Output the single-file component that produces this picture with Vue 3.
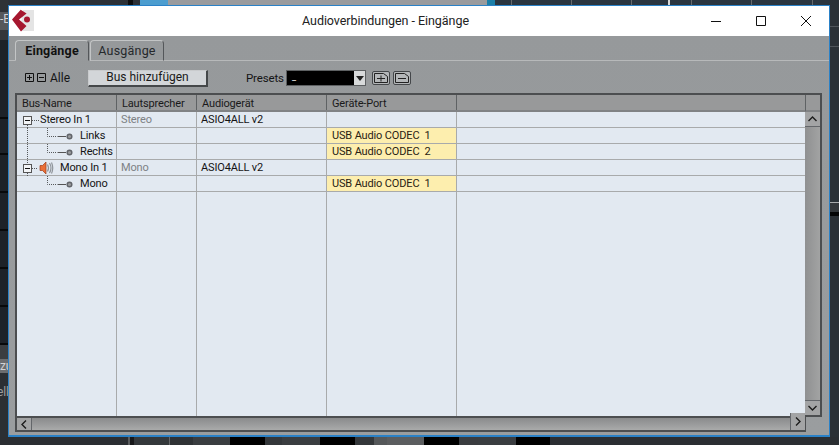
<script setup>
const columns = ['Bus-Name', 'Lautsprecher', 'Audiogerät', 'Geräte-Port', '']
const rows = [
  { name: 'Stereo In 1', tree: 'stereo', speaker: 'Stereo', device: 'ASIO4ALL v2', port: '' },
  { name: 'Links', tree: 'first', speaker: '', device: '', port: 'USB Audio CODEC  1' },
  { name: 'Rechts', tree: 'last', speaker: '', device: '', port: 'USB Audio CODEC  2' },
  { name: 'Mono In 1', tree: 'mono', speaker: 'Mono', device: 'ASIO4ALL v2', port: '' },
  { name: 'Mono', tree: 'child', speaker: '', device: '', port: 'USB Audio CODEC  1' },
]
const treeWidth = { stereo: 23, first: 63, last: 63, mono: 43, child: 63 }
const topSegs = [[128,'#2b3036'],[5,'#0c0d0e'],[7,'#2b3036'],[28,'#4c9dcf'],[319,'#9a9b9d'],[8,'#1b7fa8'],[16,'#2a3540'],[1,'#66696c'],[59,'#2a3540'],[1,'#66696c'],[59,'#2a3540'],[1,'#66696c'],[36,'#2a3540'],[2,'#d8d8d8'],[21,'#2a3540'],[1,'#66696c'],[59,'#2a3540'],[1,'#66696c'],[60,'#2a3540'],[1,'#66696c'],[26,'#2a3540']]
const bottomSegs = [[128,'#2b2e32'],[2,'#5a5c5e'],[4,'#17181a'],[35,'#34383b'],[1,'#66686a'],[23,'#2f3235'],[37,'#3a3d40'],[35,'#000'],[17,'#34373a'],[38,'#3a3d40'],[35,'#000'],[19,'#34373a'],[13,'#55585a'],[37,'#5b5d5f'],[35,'#000'],[19,'#3a3c3f'],[38,'#3a3d40'],[34,'#000'],[288,'#2b2e32']]
const leftSegs = [[12,'#2e3236'],[18,'#55585b','-E'],[10,'#34373a'],[77,'#1d2228'],[2,'#08090a'],[34,'#1d2228'],[2,'#08090a'],[36,'#1d2228'],[2,'#08090a'],[36,'#1d2228'],[2,'#08090a'],[36,'#1d2228'],[2,'#08090a'],[36,'#1d2228'],[2,'#08090a'],[36,'#1d2228'],[2,'#08090a'],[14,'#3a3d40'],[14,'#6b6d6f','zu'],[12,'#2b2f33'],[14,'#2b2f33','ell'],[41,'#2b2f33']]
const rightSegs = [[26,'#2b3136'],[1,'#50555a'],[19,'#2b3136'],[1,'#50555a'],[155,'#2b3136'],[1,'#a9abac'],[9,'#34373a'],[4,'#050505'],[229,'#2b3035']]
</script>

<template>
  <div class="screen">
    <div class="strip top">
      <i v-for="(s, i) in topSegs" :key="i" :style="{ width: s[0] + 'px', background: s[1] }"></i>
    </div>
    <div class="middle">
      <div class="strip left">
        <i v-for="(s, i) in leftSegs" :key="i" :class="{ tail: s[2] === 'ell' }" :style="{ height: s[0] + 'px', background: s[1] }">{{ s[2] }}</i>
      </div>

      <section class="window">
        <header class="titlebar">
          <svg class="logo" width="24" height="24" viewBox="0 0 24 24">
            <path d="M11 1h11v21H11l-3-2z" fill="#e4e4e4" />
            <path d="M0 10.500 8.700 .8 14.600 4.600 7 10.500 14.500 17 9 22.500z" fill="#a6172f" />
            <circle cx="15" cy="10.500" r="3" fill="#a6172f" />
          </svg>
          <div class="title">Audioverbindungen - Eingänge</div>
          <div class="caption">
            <svg width="12" height="12" viewBox="0 0 12 12"><path d="M1 6.500h10" stroke="#111" fill="none" /></svg>
            <svg width="12" height="12" viewBox="0 0 12 12"><path d="M1.500 1.500h9v9h-9z" stroke="#111" fill="none" /></svg>
            <svg width="12" height="12" viewBox="0 0 12 12"><path d="M1 1l10 10M11 1L1 11" stroke="#111" fill="none" /></svg>
          </div>
        </header>

        <div class="body">
          <nav class="tabs">
            <div class="tab active">Eingänge</div>
            <div class="tab">Ausgänge</div>
            <div class="tabline"></div>
          </nav>

          <div class="toolbar">
            <svg class="sq" width="10" height="10" viewBox="0 0 10 10"><path d="M.5.5h8v8h-8z" fill="none" stroke="#111" /><path d="M2 4.500h5M4.500 2v5" stroke="#111" /></svg>
            <svg class="sq second" width="10" height="10" viewBox="0 0 10 10"><path d="M.5.5h8v8h-8z" fill="none" stroke="#111" /><path d="M2 4.500h5" stroke="#111" /></svg>
            <span class="all">Alle</span>
            <button class="add">Bus hinzufügen</button>
            <span class="presets">Presets</span>
            <div class="select">
              <span class="value">_</span>
              <span class="arrow"><svg width="8" height="5" viewBox="0 0 8 5"><path d="M0 0h8L4 5z" fill="#222" /></svg></span>
            </div>
            <button class="mini first">
              <svg width="14" height="10" viewBox="0 0 14 10"><path d="M.5.5h9l4 3v6H.5z" fill="none" stroke="#222" /><path d="M3 5.500h8M7 2.500v6" stroke="#222" /></svg>
            </button>
            <button class="mini">
              <svg width="14" height="10" viewBox="0 0 14 10"><path d="M.5.5h9l4 3v6H.5z" fill="none" stroke="#222" /><path d="M3 5.500h8" stroke="#222" /></svg>
            </button>
          </div>

          <div class="grid">
            <div class="table">
              <div class="thead">
                <div v-for="(c, i) in columns" :key="i" class="th">{{ c }}</div>
              </div>
              <div v-for="(r, i) in rows" :key="i" class="tr">
                <div class="td name">
                  <svg class="tree" :width="treeWidth[r.tree]" height="16" :viewBox="`0 0 ${treeWidth[r.tree]} 16`">
                    <g v-if="r.tree === 'stereo' || r.tree === 'mono'">
                      <path d="M10.500 13v3" class="dot" />
                      <path v-if="r.tree === 'mono'" d="M10.500 0v4" class="dot" />
                      <path :d="r.tree === 'mono' ? 'M15 8.500h6' : 'M15 8.500h8'" class="dot" />
                      <rect x="6.500" y="4.500" width="8" height="8" fill="#f2f4f6" stroke="#555" />
                      <path d="M8 8.500h5" stroke="#111" />
                    </g>
                    <g v-if="r.tree === 'mono'">
                      <path d="M23 5.500h2.500L29 2v12l-3.500-3.500H23z" fill="#ea6f38" stroke="#9c3c18" stroke-width=".7" />
                      <path d="M30.500 4.500q2 3.500 0 7M32.500 3q3 5 0 10M34.500 2.500q2.500 5.500 0 11" fill="none" stroke="#8f959b" stroke-width="1.200" />
                    </g>
                    <g v-if="r.tree === 'first' || r.tree === 'last' || r.tree === 'child'">
                      <path v-if="r.tree !== 'child'" d="M10.500 0v16" class="dot" />
                      <path d="M30.500 0v8.500h10" class="dot" />
                      <path d="M41 8.500h8" stroke="#555" />
                      <circle cx="52.500" cy="8.500" r="2.300" fill="#9a9c9e" stroke="#62656a" stroke-width="1.500" />
                    </g>
                  </svg>
                  <span>{{ r.name }}</span>
                </div>
                <div class="td muted">{{ r.speaker }}</div>
                <div class="td">{{ r.device }}</div>
                <div class="td" :class="{ port: r.port }">{{ r.port }}</div>
                <div class="td"></div>
              </div>
              <div class="filler">
                <i></i><i></i><i></i><i></i>
              </div>
            </div>

            <div class="vscroll">
              <div class="corner"></div>
              <div class="sbtn"><svg width="9" height="6" viewBox="0 0 9 6"><path d="M.5 5 4.500 1l4 4" fill="none" stroke="#1c1c1c" stroke-width="1.400" /></svg></div>
              <div class="vtrack"></div>
              <div class="sbtn down"><svg width="9" height="6" viewBox="0 0 9 6"><path d="M.5 1l4 4 4-4" fill="none" stroke="#1c1c1c" stroke-width="1.400" /></svg></div>
            </div>

            <div class="hscroll">
              <div class="hbtn"><svg width="6" height="9" viewBox="0 0 6 9"><path d="M5 .5 1 4.500l4 4" fill="none" stroke="#1c1c1c" stroke-width="1.400" /></svg></div>
              <div class="htrack"></div>
              <div class="hbtn right"><svg width="6" height="9" viewBox="0 0 6 9"><path d="M1 .5l4 4-4 4" fill="none" stroke="#1c1c1c" stroke-width="1.400" /></svg></div>
            </div>
          </div>
        </div>
      </section>

      <div class="strip right">
        <i v-for="(s, i) in rightSegs" :key="i" :style="{ height: s[0] + 'px', background: s[1] }"></i>
      </div>
    </div>
    <div class="strip bottom">
      <i v-for="(s, i) in bottomSegs" :key="i" :style="{ width: s[0] + 'px', background: s[1] }"></i>
    </div>
  </div>
</template>

<style>
html, body { margin: 0; background: #2b3035; overflow: hidden; }
</style>

<style scoped>
.screen {
  width: 839px;
  height: 445px;
  display: flex;
  flex-direction: column;
  overflow: hidden;
  font-family: Roboto, "Noto Sans", sans-serif;
  font-size: 11px;
  letter-spacing: -.15px;
  color: #141414;
}
.strip { display: flex; flex: none; overflow: hidden; }
.strip i { display: block; flex: none; font-style: normal; }
.top { height: 5px; }
.bottom { height: 8px; }
.middle { display: flex; height: 432px; flex: none; }
.left { width: 8px; flex-direction: column; margin-top: -5px; position: relative; }
.left i { font-size: 12px; line-height: 14px; color: #d0d2d4; white-space: nowrap; overflow: hidden; }
.left i.tail { text-indent: -3px; color: #9a9c9e; }
.right { width: 9px; flex-direction: column; margin-top: -5px; }

.window {
  width: 822px;
  height: 432px;
  box-sizing: border-box;
  border: 1px solid #2a81c7;
  border-bottom-width: 2px;
  display: flex;
  flex-direction: column;
  flex: none;
}
.titlebar {
  height: 30px;
  flex: none;
  background: #fff;
  display: flex;
  align-items: center;
  position: relative;
}
.logo { margin: 0 0 0 3px; flex: none; }
.title {
  position: absolute;
  left: 293px;
  top: 7px;
  font-size: 12.500px;
  letter-spacing: -.05px;
  line-height: 16px;
  color: #222;
  white-space: nowrap;
}
.caption {
  margin-left: auto;
  display: flex;
  gap: 33px;
  padding-right: 17px;
}
.caption svg { display: block; }

.body {
  flex: 1;
  min-height: 0;
  background: linear-gradient(#96999b, #9a9d9f);
  padding-top: 4px;
  display: flex;
  flex-direction: column;
}
.tabs {
  display: flex;
  height: 21px;
  padding-left: 6px;
  flex: none;
}
.tab {
  width: 74px;
  height: 21px;
  box-sizing: border-box;
  border: 1px solid #c3c5c6;
  border-right-color: #54575a;
  border-radius: 4px 4px 0 0;
  text-align: center;
  line-height: 20px;
  font-size: 12.500px;
  letter-spacing: .2px;
  color: #25282b;
}
.tab + .tab { margin-left: 1px; }
.tab.active {
  font-weight: 700;
  border-bottom-color: transparent;
  color: #111;
}
.tab:not(.active) { border-bottom-color: #b7b9ba; }
.tabs::before {
  content: "";
  width: 6px;
  margin-left: -6px;
  border-bottom: 1px solid #b7b9ba;
}
.tabline { flex: 1; border-bottom: 1px solid #b7b9ba; }

.toolbar {
  height: 16px;
  margin-top: 9px;
  display: flex;
  align-items: center;
  flex: none;
  padding-left: 16px;
}
.sq { flex: none; }
.sq.second { margin-left: 2px; }
.all { margin-left: 3px; width: 20px; font-size: 12px; letter-spacing: 0; }
.add {
  margin-left: 18px;
  width: 120px;
  height: 17px;
  box-sizing: border-box;
  padding: 0;
  border: 1px solid #c9cbcd;
  border-right: 2px solid #45484a;
  border-bottom: 2px solid #45484a;
  background: #d3d6d9;
  font: inherit;
  font-size: 12px;
  letter-spacing: 0;
  line-height: 13px;
  color: #1a1a1a;
}
.presets { margin-left: 38px; width: 38px; font-size: 11.500px; white-space: nowrap; }
.select {
  margin-left: 2px;
  width: 80px;
  height: 16px;
  box-sizing: border-box;
  border: 1px solid #5d6062;
  background: #000;
  display: flex;
  color: #fff;
  line-height: 12px;
  position: relative;
}
.value { padding-left: 5px; font-size: 9px; flex: 1; }
.arrow {
  width: 11px;
  background: #d8dadb;
  display: flex;
  align-items: center;
  justify-content: center;
}
.mini {
  width: 18px;
  height: 14px;
  margin-left: 3px;
  padding: 0;
  box-sizing: border-box;
  border: 1px solid #44474a;
  border-radius: 2px;
  background: #b4b7b9;
  display: flex;
  align-items: center;
  justify-content: center;
}
.mini.first { margin-left: 6px; }

.grid {
  margin: 7px 0 0 6px;
  display: grid;
  grid-template-columns: 790px 17px;
  grid-template-rows: 324px 16px;
  flex: none;
}
.table {
  border-top: 2px solid #4c4e50;
  border-left: 2px solid #4c4e50;
  background: #e2e9f1;
  display: flex;
  flex-direction: column;
  min-height: 0;
}
.thead, .tr {
  display: grid;
  grid-template-columns: 100px 80px 130px 130px 348px;
  flex: none;
  box-sizing: border-box;
  height: 16px;
}
.thead { height: 17px; background: #98999a; border-bottom: 2px solid #808284; }
.th {
  box-sizing: border-box;
  padding-left: 5px;
  line-height: 18px;
  height: 15px;
  border-right: 1px solid #5f6264;
  color: #1a1a1a;
  white-space: nowrap;
}
.th:last-child { border-right: 0; }
.tr { border-bottom: 1px solid #a8aaab; }
.td {
  box-sizing: border-box;
  height: 15px;
  padding-left: 4px;
  line-height: 15px;
  border-right: 1px solid #a8aaab;
  white-space: pre;
  overflow: hidden;
}
.td:last-child { border-right: 0; }
.td.name { padding-left: 0; display: flex; overflow: visible; }
.tree { flex: none; display: block; overflow: visible; }
.dot { fill: none; stroke: #55585a; stroke-dasharray: 1 1; }
.muted { color: #7d8185; }
.port { background: #fdeeae; padding-left: 5px; color: #2a2212; }
.filler {
  flex: 1;
  display: grid;
  grid-template-columns: 100px 80px 130px 130px;
}
.filler i { border-right: 1px solid #a8aaab; }

.vscroll {
  box-sizing: border-box;
  border-top: 2px solid #4c4e50;
  border-right: 2px solid #4c4e50;
  border-bottom: 2px solid #4c4e50;
  display: flex;
  flex-direction: column;
  background: linear-gradient(90deg, #8f9091, #a2a3a3);
}
.corner { height: 17px; background: #98999a; border-bottom: 2px solid #808284; box-sizing: border-box; border-left: 1px solid #5f6264; }
.sbtn {
  height: 15px;
  box-sizing: border-box;
  background: #a3a4a5;
  border-bottom: 1px solid #63666a;
  display: flex;
  align-items: center;
  justify-content: center;
}
.sbtn.down { border-bottom: 0; border-top: 1px solid #63666a; }
.vtrack { flex: 1; }

.hscroll {
  grid-column: 1;
  box-sizing: border-box;
  width: 791px;
  height: 16px;
  border: 2px solid #4c4e50;
  border-top-width: 2px;
  border-right-width: 1px;
  display: flex;
  background: linear-gradient(#8a8b8c, #a9aaaa);
  margin-top: -1px;
}
.hbtn {
  width: 15px;
  box-sizing: border-box;
  background: #a3a4a5;
  border-right: 1px solid #63666a;
  display: flex;
  align-items: center;
  justify-content: center;
}
.hbtn.right { border-right: 0; border-left: 1px solid #63666a; }
.htrack { flex: 1; }
</style>
